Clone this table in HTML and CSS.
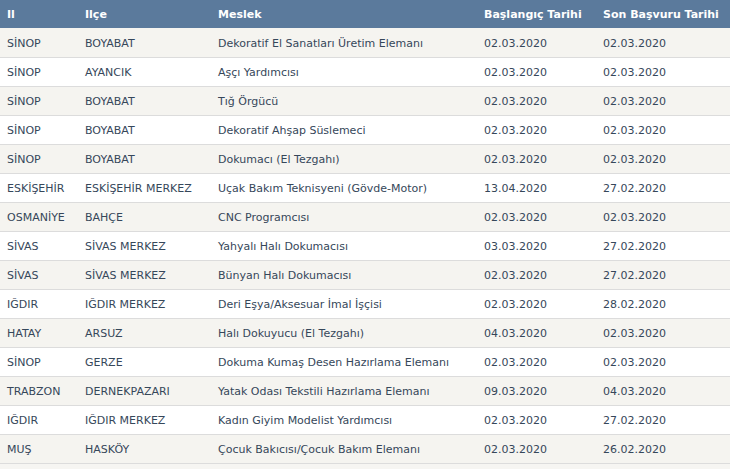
FILE: index.html
```html
<!DOCTYPE html>
<html lang="tr">
<head>
<meta charset="utf-8">
<title>Meslek Listesi</title>
<link rel="stylesheet" href="styles.css">
</head>
<body>
<table class="jobs">
  <colgroup>
    <col class="c-il"><col class="c-ilce"><col class="c-meslek"><col class="c-bas"><col class="c-son">
  </colgroup>
  <thead>
    <tr><th>Il</th><th>Ilçe</th><th>Meslek</th><th>Başlangıç Tarihi</th><th>Son Başvuru Tarihi</th></tr>
  </thead>
  <tbody>
    <tr class="alt"><td>SİNOP</td><td>BOYABAT</td><td>Dekoratif El Sanatları Üretim Elemanı</td><td>02.03.2020</td><td>02.03.2020</td></tr>
    <tr><td>SİNOP</td><td>AYANCIK</td><td>Aşçı Yardımcısı</td><td>02.03.2020</td><td>02.03.2020</td></tr>
    <tr class="alt"><td>SİNOP</td><td>BOYABAT</td><td>Tığ Örgücü</td><td>02.03.2020</td><td>02.03.2020</td></tr>
    <tr><td>SİNOP</td><td>BOYABAT</td><td>Dekoratif Ahşap Süslemeci</td><td>02.03.2020</td><td>02.03.2020</td></tr>
    <tr class="alt"><td>SİNOP</td><td>BOYABAT</td><td>Dokumacı (El Tezgahı)</td><td>02.03.2020</td><td>02.03.2020</td></tr>
    <tr><td>ESKİŞEHİR</td><td>ESKİŞEHİR MERKEZ</td><td>Uçak Bakım Teknisyeni (Gövde-Motor)</td><td>13.04.2020</td><td>27.02.2020</td></tr>
    <tr class="alt"><td>OSMANİYE</td><td>BAHÇE</td><td>CNC Programcısı</td><td>02.03.2020</td><td>02.03.2020</td></tr>
    <tr><td>SİVAS</td><td>SİVAS MERKEZ</td><td>Yahyalı Halı Dokumacısı</td><td>03.03.2020</td><td>27.02.2020</td></tr>
    <tr class="alt"><td>SİVAS</td><td>SİVAS MERKEZ</td><td>Bünyan Halı Dokumacısı</td><td>02.03.2020</td><td>27.02.2020</td></tr>
    <tr><td>IĞDIR</td><td>IĞDIR MERKEZ</td><td>Deri Eşya/Aksesuar İmal İşçisi</td><td>02.03.2020</td><td>28.02.2020</td></tr>
    <tr class="alt"><td>HATAY</td><td>ARSUZ</td><td>Halı Dokuyucu (El Tezgahı)</td><td>04.03.2020</td><td>02.03.2020</td></tr>
    <tr><td>SİNOP</td><td>GERZE</td><td>Dokuma Kumaş Desen Hazırlama Elemanı</td><td>02.03.2020</td><td>02.03.2020</td></tr>
    <tr class="alt"><td>TRABZON</td><td>DERNEKPAZARI</td><td>Yatak Odası Tekstili Hazırlama Elemanı</td><td>09.03.2020</td><td>04.03.2020</td></tr>
    <tr><td>IĞDIR</td><td>IĞDIR MERKEZ</td><td>Kadın Giyim Modelist Yardımcısı</td><td>02.03.2020</td><td>27.02.2020</td></tr>
    <tr class="alt"><td>MUŞ</td><td>HASKÖY</td><td>Çocuk Bakıcısı/Çocuk Bakım Elemanı</td><td>02.03.2020</td><td>26.02.2020</td></tr>
  </tbody>
</table>
</body>
</html>
```

FILE: styles.css
```css
html, body {
  margin: 0;
  padding: 0;
  background: #f6f5f2;
}
body {
  font-family: "DejaVu Sans", Verdana, sans-serif;
  font-size: 11px;
  color: #36475a;
}
.jobs {
  width: 730px;
  border-collapse: collapse;
  table-layout: fixed;
}
.c-il { width: 78px; }
.c-ilce { width: 133px; }
.c-meslek { width: 266px; }
.c-bas { width: 119px; }
.c-son { width: 134px; }
.jobs th {
  background: #5b7a9c;
  color: #fff;
  font-weight: bold;
  text-align: left;
  height: 28px;
  padding: 1px 0 0 7px;
  box-sizing: border-box;
  white-space: nowrap;
}
.jobs td {
  background: #fff;
  height: 29px;
  padding: 2px 0 0 7px;
  box-sizing: border-box;
  border-bottom: 1px solid #dcdcdc;
  white-space: nowrap;
}
.jobs tr.alt td {
  background: #f5f4f0;
}
```
